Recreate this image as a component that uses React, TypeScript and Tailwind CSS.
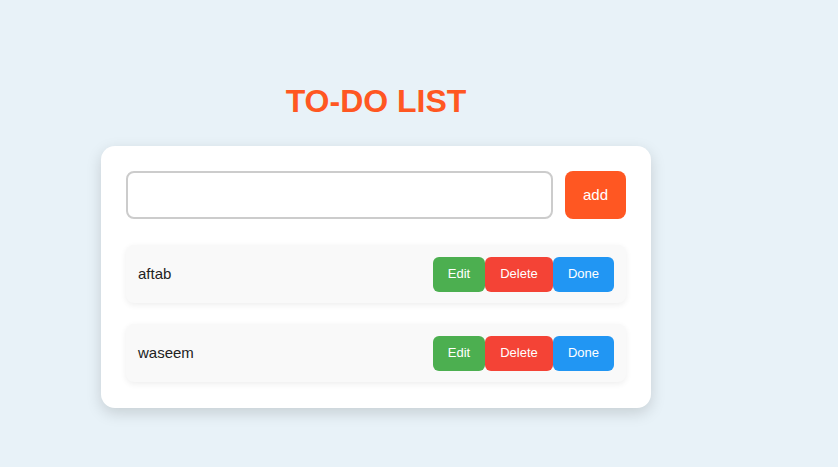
import React from "react";

const items = ["aftab", "waseem"];

export default function App() {
  return (
    <div
      className="min-h-[467px] w-full bg-[#e8f2f8] pt-[83px]"
      style={{ fontFamily: '"Liberation Sans", Arial, sans-serif' }}
    >
      <div className="ml-[101px] w-[550px]">
        <h1 className="m-0 text-center text-[32px] font-bold leading-[36px] text-[#ff5722]">
          TO-DO LIST
        </h1>
        <div className="mt-[27px] rounded-[14px] bg-white px-[25px] pt-[25px] pb-[26px] shadow-[0_5px_15px_rgba(0,0,0,0.15)]">
          <div className="flex gap-[12px]">
            <input
              type="text"
              className="h-[48px] flex-1 rounded-[8px] border-2 border-[#cccccc] bg-white px-3 text-[15px] outline-none"
            />
            <button className="h-[48px] w-[61px] rounded-[8px] bg-[#ff5722] text-[15px] text-white">
              add
            </button>
          </div>
          <div className="mt-[26px] flex flex-col gap-[21px]">
            {items.map((t) => (
              <div
                key={t}
                className="flex h-[58px] items-center justify-between rounded-[8px] bg-[#f9f9f9] px-[12px] shadow-[0_2px_6px_rgba(0,0,0,0.07)]"
              >
                <span className="text-[15px] text-[#222]">{t}</span>
                <div className="flex">
                  <button className="h-[35px] w-[52px] rounded-[6px] bg-[#4caf50] text-[13px] text-white">
                    Edit
                  </button>
                  <button className="h-[35px] w-[68px] rounded-[6px] bg-[#f44336] text-[13px] text-white">
                    Delete
                  </button>
                  <button className="h-[35px] w-[61px] rounded-[6px] bg-[#2196f3] text-[13px] text-white">
                    Done
                  </button>
                </div>
              </div>
            ))}
          </div>
        </div>
      </div>
    </div>
  );
}
